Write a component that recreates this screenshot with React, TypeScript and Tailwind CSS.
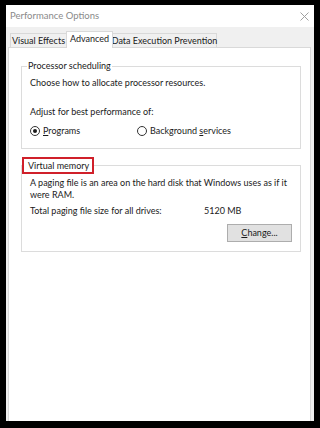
function Radio({ checked }: { checked?: boolean }) {
  return (
    <span className="w-[10px] h-[10px] rounded-full border border-[#333] bg-white flex items-center justify-center shrink-0">
      {checked && <span className="w-[4px] h-[4px] rounded-full bg-[#1a1a1a]" />}
    </span>
  );
}

export default function App() {
  return (
    <div className="w-[320px] h-[428px] bg-black pt-[5px] pl-[6px] font-['Lato',sans-serif] text-[9px] text-[#1a1a1a] leading-[12px] whitespace-nowrap">
      <div className="w-[308px] h-[416px] bg-[#f0f0f0] flex flex-col">
        {/* title bar */}
        <div className="h-[22px] bg-white flex items-center justify-between pl-[4px] pr-[5px]">
          <span className="text-[#8a8a8a] text-[9.5px]">Performance Options</span>
          <svg width="9" height="9" viewBox="0 0 9 9">
            <path d="M0.5 0.5 L8.5 8.5 M8.5 0.5 L0.5 8.5" stroke="#a0a0a0" strokeWidth="1" />
          </svg>
        </div>

        {/* tabs */}
        <div className="flex items-end pl-[4px] h-[20px]">
          <div className="w-[57px] h-[14px] border border-[#d9d9d9] border-b-0 bg-[#f0f0f0] flex items-center justify-center">Visual Effects</div>
          <div className="w-[47px] h-[17px] border border-[#d9d9d9] border-b-0 bg-white flex items-center justify-center -ml-[1px] relative z-10 -mb-[1px] pb-[3px]">Advanced</div>
          <div className="w-[104px] h-[14px] border border-[#d9d9d9] border-b-0 border-l-0 bg-[#f0f0f0] flex items-center justify-center">Data Execution Prevention</div>
        </div>

        {/* panel */}
        <div className="flex-1 ml-[2px] mr-[3px] bg-white border border-[#d9d9d9] border-b-0 pt-[18px] pl-[12px] pr-[9px]">
          {/* processor scheduling */}
          <div className="relative border border-[#dcdcdc] h-[83px] pl-[8px] pr-[8px]">
            <span className="absolute -top-[7px] left-[5px] bg-white px-[1px]">Processor scheduling</span>
            <div className="flex flex-col pt-[10px]">
              <span>Choose how to allocate processor resources.</span>
              <span className="mt-[17px]">Adjust for best performance of:</span>
              <div className="flex items-center mt-[7px]">
                <div className="flex items-center gap-[3px] w-[107px]">
                  <Radio checked />
                  <span><span className="underline underline-offset-1">P</span>rograms</span>
                </div>
                <div className="flex items-center gap-[3px]">
                  <Radio />
                  <span>Background <span className="underline underline-offset-1">s</span>ervices</span>
                </div>
              </div>
            </div>
          </div>

          {/* virtual memory */}
          <div className="relative border border-[#dcdcdc] h-[87px] mt-[16px] pl-[8px] pr-[1px]">
            <span className="absolute -top-[9px] left-[0px] w-[72px] h-[17px] bg-white pl-[4px] border-2 border-[#d0202a] flex items-center">Virtual memory</span>
            <div className="flex flex-col pt-[11px]">
              <span className="whitespace-normal">A paging file is an area on the hard disk that Windows uses as if it were RAM.</span>
              <div className="flex mt-[4px]">
                <span className="w-[174px]">Total paging file size for all drives:</span>
                <span>5120 MB</span>
              </div>
              <div className="flex justify-end mt-[7px] pr-[7px]">
                <button className="w-[65px] h-[18px] bg-[#e1e1e1] border border-[#adadad] flex items-center justify-center">
                  <span><span className="underline underline-offset-1">C</span>hange...</span>
                </button>
              </div>
            </div>
          </div>
        </div>
      </div>
    </div>
  );
}
